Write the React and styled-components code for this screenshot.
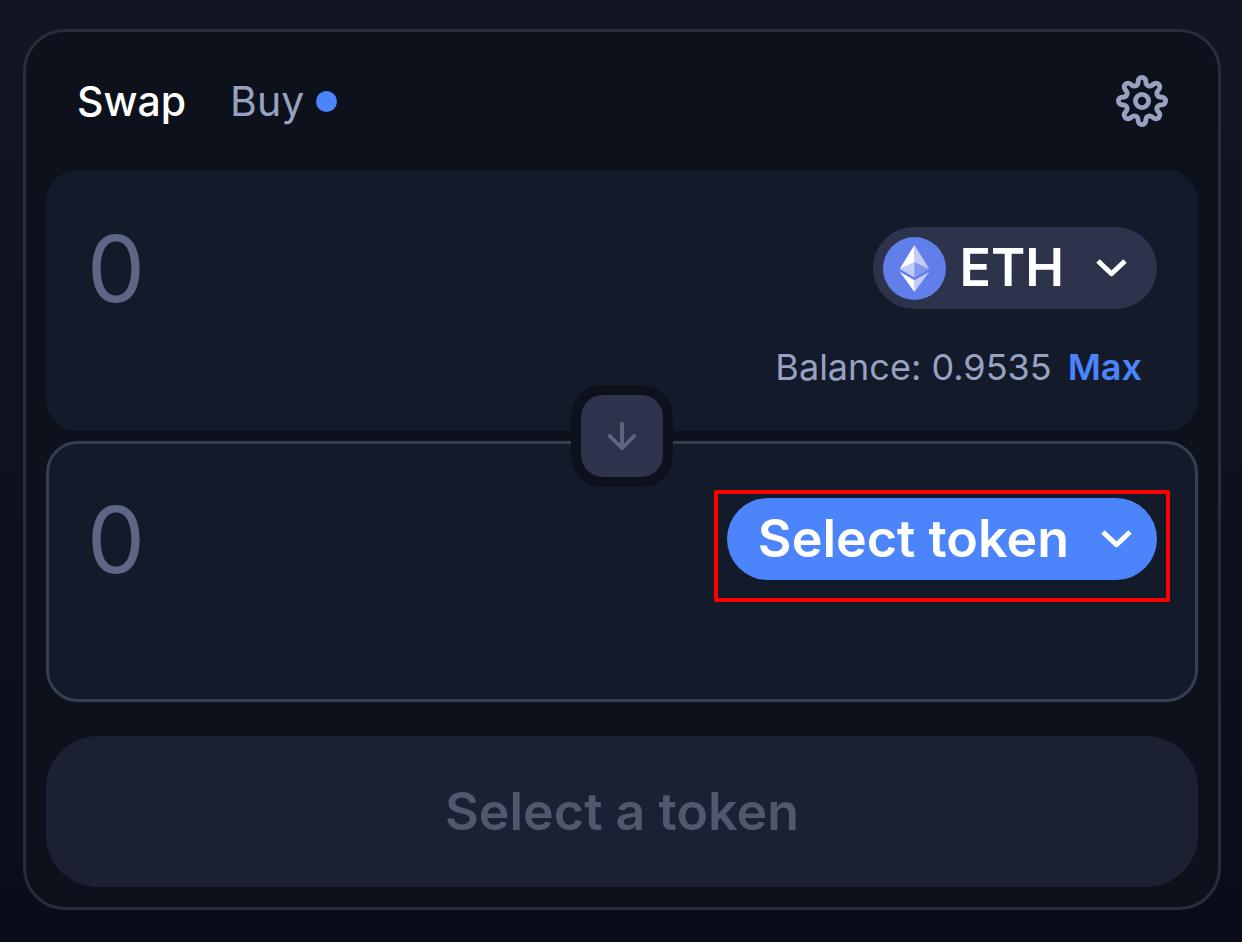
// src/App.jsx
import React from "react";
import styled, { createGlobalStyle } from "styled-components";

const GlobalStyle = createGlobalStyle`
    * {
        box-sizing: border-box;
    }

    body {
        margin: 0;
        min-height: 100vh;
        background: linear-gradient(180deg, #131524 0%, #0a0c1a 100%);
        color: #ffffff;
        font-family: Inter, sans-serif;
        font-optical-sizing: none;
    }

    button,
    input {
        font-family: inherit;
        font-optical-sizing: inherit;
        color: inherit;
        border: 0;
        padding: 0;
        margin: 0;
        background: none;
    }

    button {
        cursor: pointer;
    }
`;

const Page = styled.main`
    padding: 29px 21px 32px 23px;
`;

const Widget = styled.section`
    border: 3px solid #2a2c3c;
    border-radius: 42px;
    background: #0d111b;
    padding: 0 20px 20px;
`;

const Header = styled.header`
    display: flex;
    align-items: center;
    justify-content: space-between;
    height: 138px;
    padding: 0 30px 0 31px;
`;

const Tabs = styled.nav`
    display: flex;
    gap: 44px;
`;

const Tab = styled.button`
    display: flex;
    align-items: center;
    gap: 12px;
    font-size: 41px;
    line-height: 50px;
    font-weight: ${({ $active }) => ($active ? 500 : 400)};
    color: ${({ $active }) => ($active ? "#ffffff" : "#98a1c0")};
`;

const Dot = styled.span`
    width: 21px;
    height: 21px;
    border-radius: 50%;
    background: #4c84fc;
`;

const IconButton = styled.button`
    display: flex;
    color: #98a1c0;
`;

const Panel = styled.div`
    height: 261px;
    padding: 40px 38px 0;
    border: 3px solid ${({ $outlined }) => ($outlined ? "#363e52" : "#131a29")};
    border-radius: 32px;
    background: #131a29;
`;

const AmountRow = styled.div`
    display: flex;
    align-items: center;
    justify-content: space-between;
    height: 110px;
`;

const AmountInput = styled.input`
    flex: 1;
    min-width: 0;
    height: 110px;
    font-size: 92px;
    font-weight: 400;
    outline: none;

    &::placeholder {
        color: #5d6785;
        opacity: 1;
    }
`;

const TokenButton = styled.button`
    display: flex;
    align-items: center;
    gap: 13px;
    height: 82px;
    padding: ${({ $primary }) => ($primary ? "0 25px 0 31px" : "0 30px 0 10px")};
    border-radius: 41px;
    background: ${({ $primary }) => ($primary ? "#4c84fc" : "#2c334a")};
    font-size: 52px;
    line-height: 62px;
    font-weight: 600;

    svg:last-child {
        margin-left: 19px;
    }
`;

/* red frame drawn around the token picker */
const Highlight = styled.div`
    position: relative;

    &::after {
        content: '';
        position: absolute;
        inset: -8px -13px -22px;
        border: 4px solid #ff0000;
        border-radius: 2px;
        pointer-events: none;
    }
`;

const BalanceRow = styled.div`
    display: flex;
    justify-content: flex-end;
    gap: 16px;
    margin-top: 22px;
    padding-right: 15px;
    font-size: 36px;
    line-height: 44px;
    color: #98a1c0;
`;

const MaxButton = styled.button`
    font-size: 36px;
    line-height: 44px;
    font-weight: 600;
    color: #4c84fc;
`;

/* taller than the gap between the panels, so it overlaps both */
const SwitchButton = styled.button`
    position: relative;
    z-index: 1;
    display: flex;
    align-items: center;
    justify-content: center;
    width: 102px;
    height: 102px;
    margin: -46px auto;
    border: 10px solid #0d111b;
    border-radius: 32px;
    background: #2c334a;
    color: #5d6785;
`;

const SubmitButton = styled.button`
    width: 100%;
    height: 151px;
    margin-top: 34px;
    border-radius: 52px;
    background: #1b2132;
    font-size: 52px;
    line-height: 62px;
    font-weight: 600;
    color: #51576e;
`;

const TEETH = [0, 45, 90, 135, 180, 225, 270, 315];

function GearIcon() {
  return (
    <svg width="52" height="52" viewBox="-26 -26 52 52" fill="none" stroke="currentColor" strokeWidth="4.8" strokeLinecap="round" aria-hidden="true">
      {TEETH.map((angle) => (
        <path key={angle} d="M-3.8-19.8A3.8 3.8 0 0 1 3.8-19.8C3.8-14.9 7.85-13.2 11.3-16.7" transform={`rotate(${angle})`} />
      ))}
      <circle r="6.6" />
    </svg>
  );
}

function Chevron() {
  return (
    <svg width="31" height="18" viewBox="0 0 31 18" fill="none" stroke="currentColor" strokeWidth="5" strokeLinejoin="round" aria-hidden="true">
      <path d="M2 2L15.5 14.8L29 2" />
    </svg>
  );
}

function ArrowDown() {
  return (
    <svg width="42" height="42" viewBox="0 0 24 24" fill="none" stroke="currentColor" strokeWidth="2.2" strokeLinecap="round" strokeLinejoin="round" aria-hidden="true">
      <path d="M12 5v14M5 12l7 7 7-7" />
    </svg>
  );
}

function EthLogo() {
  return (
    <svg width="63" height="63" viewBox="0 0 32 32" aria-hidden="true">
      <circle cx="16" cy="16" r="16" fill="#627eea" />
      <g fill="#ffffff" transform="translate(-0.5 0)">
        <path fillOpacity="0.602" d="M16.498 4v8.87l7.497 3.35z" />
        <path d="M16.498 4L9 16.22l7.498-3.35z" />
        <path fillOpacity="0.602" d="M16.498 21.968v6.027L24 17.616z" />
        <path d="M16.498 27.995v-6.028L9 17.616z" />
        <path fillOpacity="0.2" d="M16.498 20.573l7.497-4.353-7.497-3.348z" />
        <path fillOpacity="0.602" d="M9 16.22l7.498 4.353v-7.701z" />
      </g>
    </svg>
  );
}

function App() {
  return (
    <>
      <GlobalStyle />
      <Page>
        <Widget>
          <Header>
            <Tabs>
              <Tab type="button" $active>Swap</Tab>
              <Tab type="button">
                Buy
                <Dot />
              </Tab>
            </Tabs>
            <IconButton type="button" aria-label="Settings">
              <GearIcon />
            </IconButton>
          </Header>

          <Panel>
            <AmountRow>
              <AmountInput type="text" inputMode="decimal" placeholder="0" aria-label="Amount to pay" />
              <TokenButton type="button">
                <EthLogo />
                ETH
                <Chevron />
              </TokenButton>
            </AmountRow>
            <BalanceRow>
              <span>Balance: 0.9535</span>
              <MaxButton type="button">Max</MaxButton>
            </BalanceRow>
          </Panel>

          <SwitchButton type="button" aria-label="Switch tokens">
            <ArrowDown />
          </SwitchButton>

          <Panel $outlined>
            <AmountRow>
              <AmountInput type="text" inputMode="decimal" placeholder="0" aria-label="Amount to receive" />
              <Highlight>
                <TokenButton type="button" $primary>
                  Select token
                  <Chevron />
                </TokenButton>
              </Highlight>
            </AmountRow>
          </Panel>

          <SubmitButton type="button">Select a token</SubmitButton>
        </Widget>
      </Page>
    </>
  );
}

export default App;
